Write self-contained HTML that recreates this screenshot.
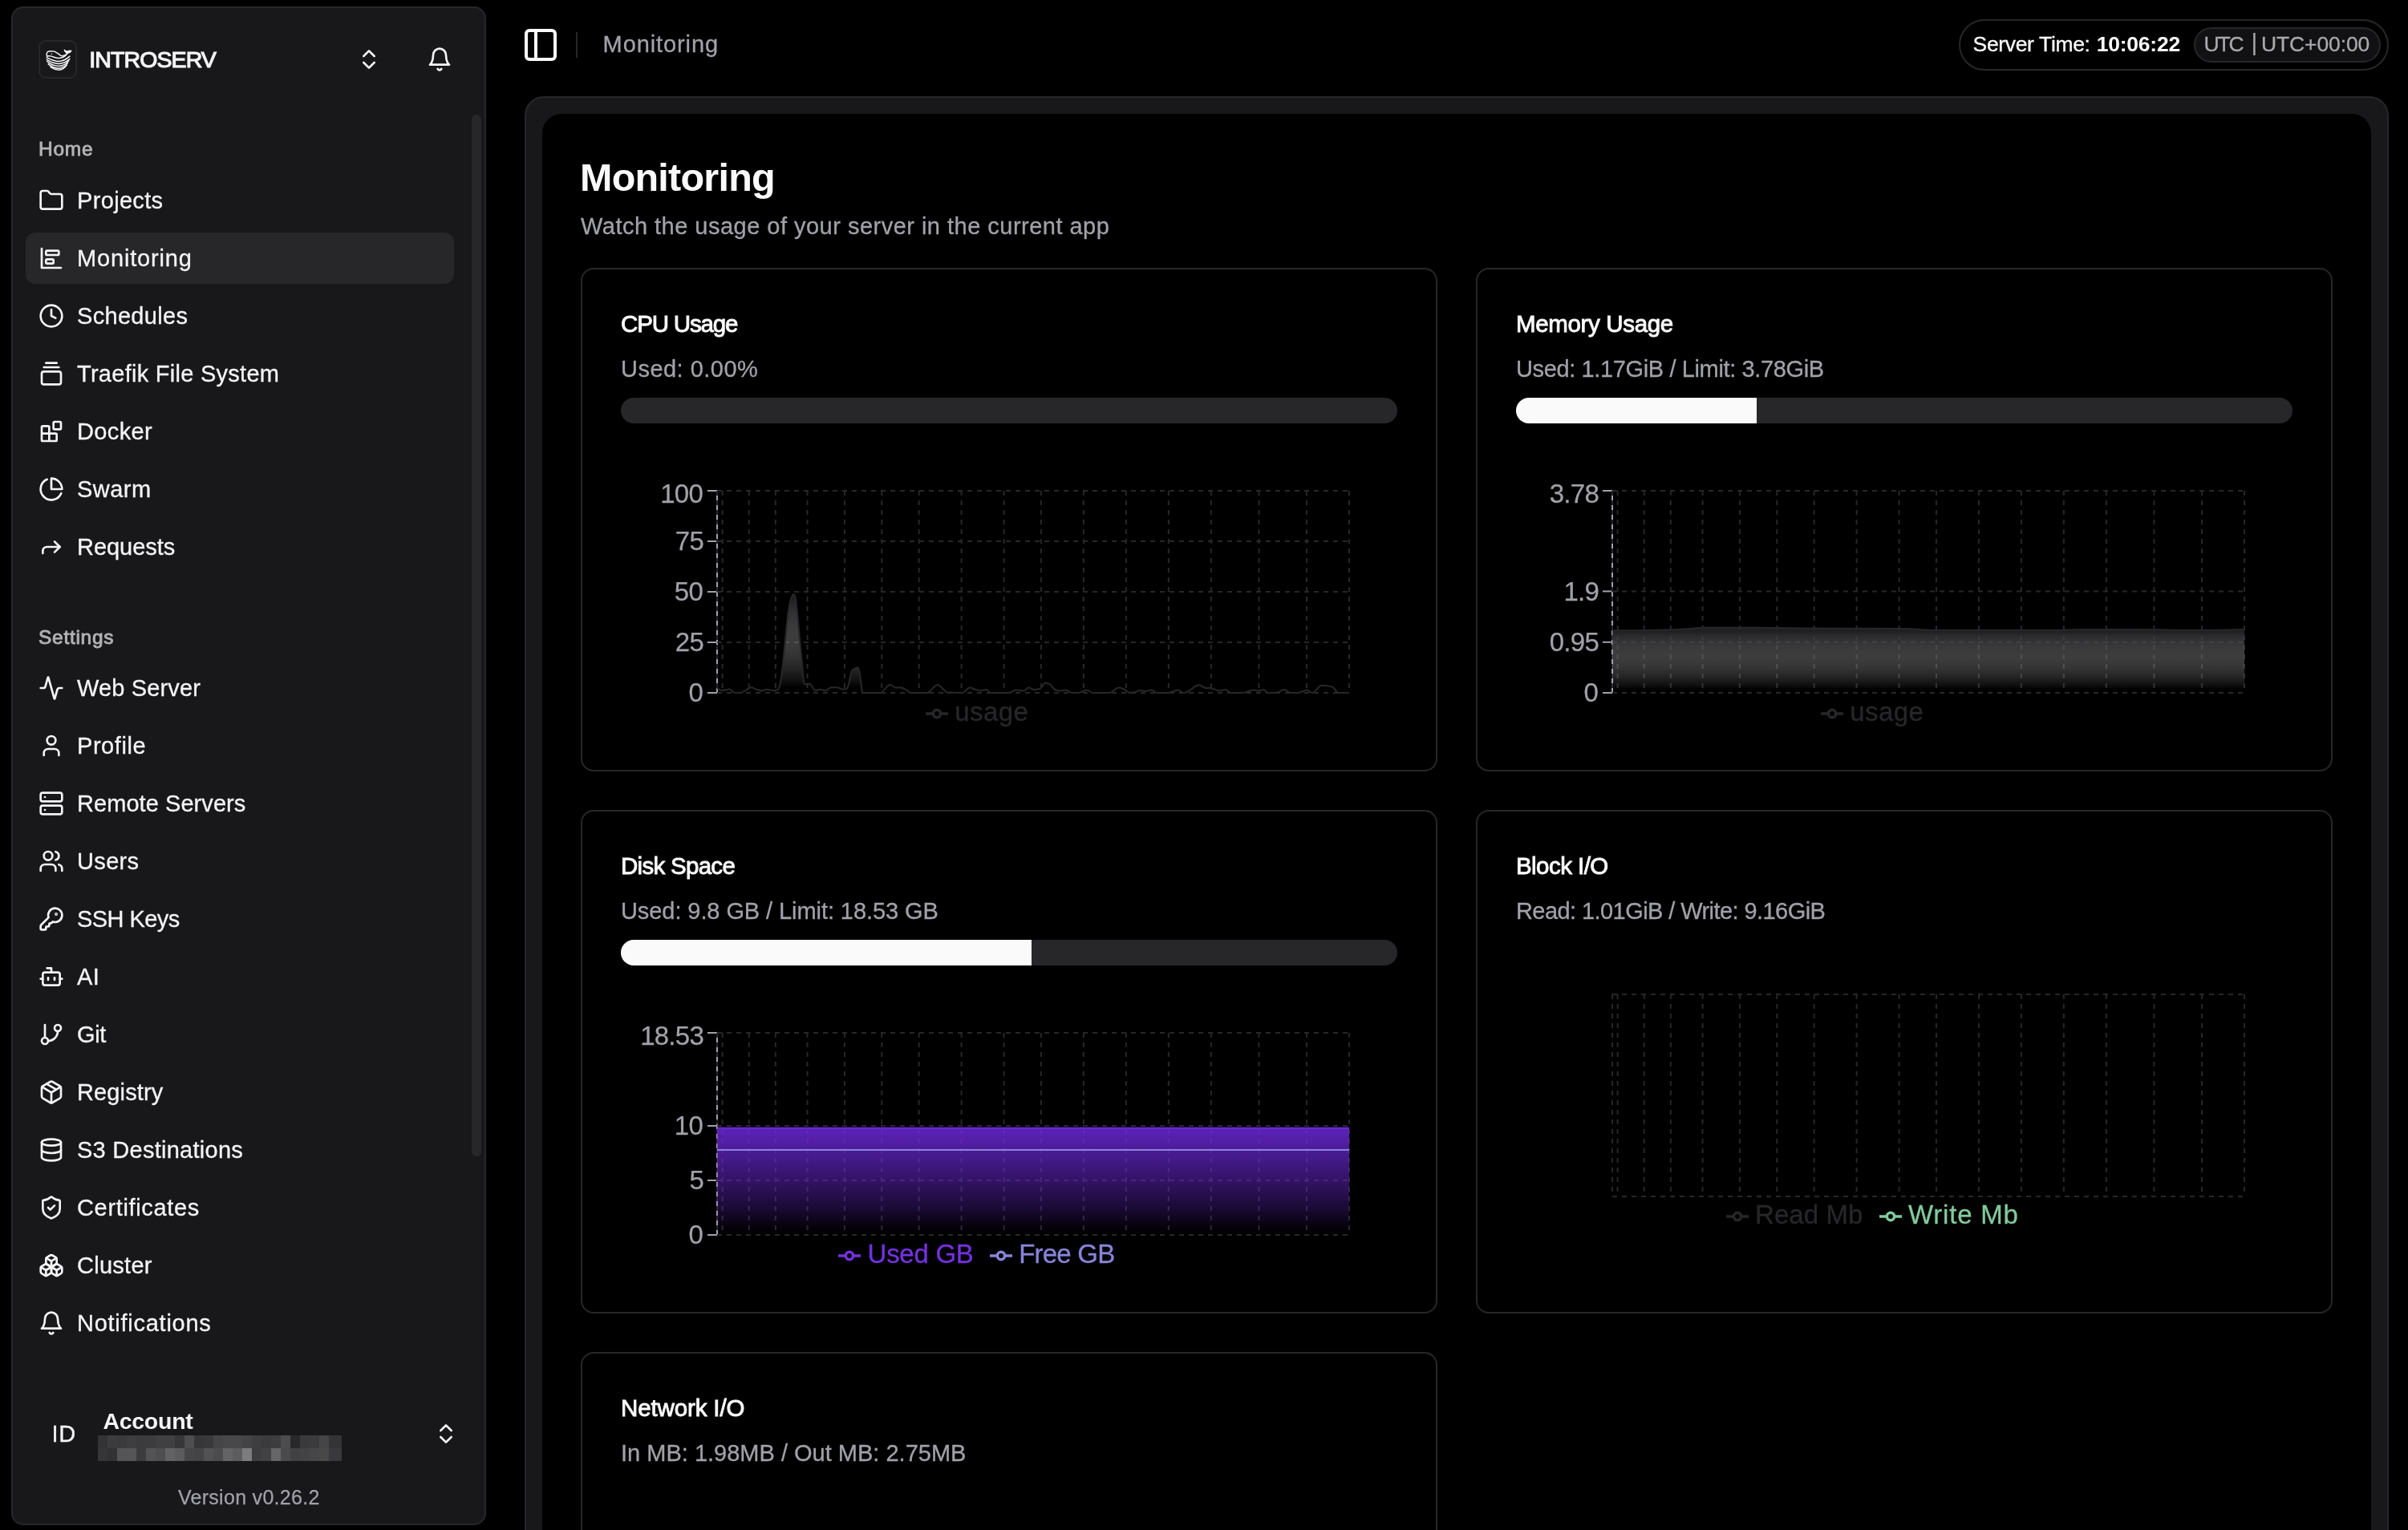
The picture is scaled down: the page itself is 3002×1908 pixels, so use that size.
<!DOCTYPE html>
<html lang="en"><head><meta charset="utf-8"><title>Monitoring</title>
<style>
html,body{margin:0;padding:0;background:#000;}
body{width:3002px;height:1908px;overflow:hidden;position:relative;font-family:"Liberation Sans",sans-serif;}
#root{position:absolute;left:0;top:0;width:3002px;height:1908px;overflow:hidden;will-change:transform;}
.abs{position:absolute;}
.t{position:absolute;white-space:nowrap;}
.ic{position:absolute;display:block;overflow:visible;}
</style></head><body><div id="root">
<div class="abs" style="left:14px;top:8px;width:592px;height:1894px;background:#18181b;border:2px solid #27272a;border-radius:15px;box-sizing:border-box"></div>
<div class="abs" style="left:48px;top:50px;width:48px;height:48px;border:2px solid #27272a;border-radius:9px;box-sizing:border-box"></div>
<svg class="ic" style="left:44px;top:46.1px" width="56" height="56" viewBox="0 0 1530 1530" fill="none" stroke="#f4f4f5" stroke-width="40" stroke-linecap="round" stroke-linejoin="round">
<path d="M400,655 C380,610 382,525 440,497 C500,482 600,486 650,496 C730,530 800,595 880,645 C960,652 1040,625 1085,548"/>
<path d="M400,655 C470,640 560,655 640,690 C720,725 860,735 950,690 C1010,660 1070,610 1100,552"/>
<path d="M990,440 C1015,472 1052,490 1097,490 C1132,468 1180,460 1228,472 C1200,522 1150,558 1090,552 C1030,532 997,492 990,440 Z" fill="#f4f4f5" stroke-width="30"/>
<path d="M386,700 C500,760 650,832 800,836 C950,830 1080,745 1172,660"/>
<path d="M386,770 C480,835 650,912 800,916 C950,910 1080,835 1172,752"/>
<path d="M402,835 C480,905 650,990 800,996 C940,990 1060,912 1142,812"/>
<path d="M442,925 C520,995 660,1070 800,1074 C930,1068 1030,1000 1102,892"/>
<path d="M520,1030 C600,1082 700,1124 800,1128 C900,1124 1000,1070 1072,962"/>
<circle cx="556" cy="578" r="20" fill="#f4f4f5" stroke="none"/>
</svg>
<div class="t" style="left:111.30px;top:60.27px;font-size:28.5px;line-height:28.5px;color:#f4f4f5;font-weight:400;letter-spacing:-0.906px;-webkit-text-stroke:1.15px #f4f4f5;">INTROSERV</div>
<svg class="ic" style="left:444.0px;top:58.0px" width="32" height="32" viewBox="0 0 24 24" fill="none" stroke="#f4f4f5" stroke-width="2" stroke-linecap="round" stroke-linejoin="round"><path d="m7 15 5 5 5-5"/><path d="m7 9 5-5 5 5"/></svg>
<svg class="ic" style="left:532.0px;top:58.0px" width="32" height="32" viewBox="0 0 24 24" fill="none" stroke="#f4f4f5" stroke-width="2" stroke-linecap="round" stroke-linejoin="round"><path d="M6 8a6 6 0 0 1 12 0c0 7 3 9 3 9H3s3-2 3-9"/><path d="M10.3 21a1.94 1.94 0 0 0 3.4 0"/></svg>
<div class="abs" style="left:588px;top:143px;width:12px;height:1299px;background:#27272a;border-radius:6px"></div>
<div class="abs" style="left:32px;top:290px;width:534px;height:64px;background:#27272a;border-radius:12px"></div>
<div class="t" style="left:48.00px;top:174.26px;font-size:24.5px;line-height:24.5px;color:#b2b2b3;font-weight:400;letter-spacing:0.757px;-webkit-text-stroke:0.9px #b2b2b3;">Home</div>
<div class="t" style="left:48.00px;top:782.66px;font-size:24.5px;line-height:24.5px;color:#b2b2b3;font-weight:400;letter-spacing:0.718px;-webkit-text-stroke:0.9px #b2b2b3;">Settings</div>
<svg class="ic" style="left:48.0px;top:234.0px" width="32" height="32" viewBox="0 0 24 24" fill="none" stroke="#f4f4f5" stroke-width="2" stroke-linecap="round" stroke-linejoin="round"><path d="M20 20a2 2 0 0 0 2-2V8a2 2 0 0 0-2-2h-7.9a2 2 0 0 1-1.69-.9L9.6 3.9A2 2 0 0 0 7.93 3H4a2 2 0 0 0-2 2v13a2 2 0 0 0 2 2Z"/></svg>
<div class="t" style="left:96.00px;top:236.15px;font-size:29px;line-height:29px;color:#f4f4f5;font-weight:400;letter-spacing:0.335px;-webkit-text-stroke:0.3px #f4f4f5;">Projects</div>
<svg class="ic" style="left:48.0px;top:306.0px" width="32" height="32" viewBox="0 0 24 24" fill="none" stroke="#f4f4f5" stroke-width="2" stroke-linecap="round" stroke-linejoin="round"><path d="M3 3v18h18"/><rect width="12" height="4" x="7" y="5" rx="1"/><rect width="7" height="4" x="7" y="13" rx="1"/></svg>
<div class="t" style="left:96.00px;top:308.15px;font-size:29px;line-height:29px;color:#f4f4f5;font-weight:400;letter-spacing:0.837px;-webkit-text-stroke:0.3px #f4f4f5;">Monitoring</div>
<svg class="ic" style="left:48.0px;top:378.0px" width="32" height="32" viewBox="0 0 24 24" fill="none" stroke="#f4f4f5" stroke-width="2" stroke-linecap="round" stroke-linejoin="round"><circle cx="12" cy="12" r="10"/><polyline points="12 6 12 12 16 14"/></svg>
<div class="t" style="left:96.00px;top:380.15px;font-size:29px;line-height:29px;color:#f4f4f5;font-weight:400;letter-spacing:0.309px;-webkit-text-stroke:0.3px #f4f4f5;">Schedules</div>
<svg class="ic" style="left:48.0px;top:450.0px" width="32" height="32" viewBox="0 0 24 24" fill="none" stroke="#f4f4f5" stroke-width="2" stroke-linecap="round" stroke-linejoin="round"><path d="M7 2h10"/><path d="M5 6h14"/><rect width="18" height="12" x="3" y="10" rx="2"/></svg>
<div class="t" style="left:96.00px;top:452.15px;font-size:29px;line-height:29px;color:#f4f4f5;font-weight:400;letter-spacing:0.271px;-webkit-text-stroke:0.3px #f4f4f5;">Traefik File System</div>
<svg class="ic" style="left:48.0px;top:522.0px" width="32" height="32" viewBox="0 0 24 24" fill="none" stroke="#f4f4f5" stroke-width="2" stroke-linecap="round" stroke-linejoin="round"><rect width="7" height="7" x="14" y="3" rx="1"/><path d="M10 21V8a1 1 0 0 0-1-1H4a1 1 0 0 0-1 1v12a1 1 0 0 0 1 1h12a1 1 0 0 0 1-1v-5a1 1 0 0 0-1-1H3"/></svg>
<div class="t" style="left:96.00px;top:524.15px;font-size:29px;line-height:29px;color:#f4f4f5;font-weight:400;letter-spacing:0.360px;-webkit-text-stroke:0.3px #f4f4f5;">Docker</div>
<svg class="ic" style="left:48.0px;top:594.0px" width="32" height="32" viewBox="0 0 24 24" fill="none" stroke="#f4f4f5" stroke-width="2" stroke-linecap="round" stroke-linejoin="round"><path d="M21.21 15.89A10 10 0 1 1 8 2.83"/><path d="M22 12A10 10 0 0 0 12 2v10z"/></svg>
<div class="t" style="left:96.00px;top:596.15px;font-size:29px;line-height:29px;color:#f4f4f5;font-weight:400;letter-spacing:0.482px;-webkit-text-stroke:0.3px #f4f4f5;">Swarm</div>
<svg class="ic" style="left:48.0px;top:666.0px" width="32" height="32" viewBox="0 0 24 24" fill="none" stroke="#f4f4f5" stroke-width="2" stroke-linecap="round" stroke-linejoin="round"><polyline points="15 17 20 12 15 7"/><path d="M4 18v-2a4 4 0 0 1 4-4h12"/></svg>
<div class="t" style="left:96.00px;top:668.15px;font-size:29px;line-height:29px;color:#f4f4f5;font-weight:400;letter-spacing:-0.045px;-webkit-text-stroke:0.3px #f4f4f5;">Requests</div>
<svg class="ic" style="left:48.0px;top:842.0px" width="32" height="32" viewBox="0 0 24 24" fill="none" stroke="#f4f4f5" stroke-width="2" stroke-linecap="round" stroke-linejoin="round"><path d="M22 12h-2.48a2 2 0 0 0-1.93 1.46l-2.35 8.36a.25.25 0 0 1-.48 0L9.24 2.18a.25.25 0 0 0-.48 0l-2.35 8.36A2 2 0 0 1 4.49 12H2"/></svg>
<div class="t" style="left:96.00px;top:844.15px;font-size:29px;line-height:29px;color:#f4f4f5;font-weight:400;letter-spacing:0.142px;-webkit-text-stroke:0.3px #f4f4f5;">Web Server</div>
<svg class="ic" style="left:48.0px;top:914.0px" width="32" height="32" viewBox="0 0 24 24" fill="none" stroke="#f4f4f5" stroke-width="2" stroke-linecap="round" stroke-linejoin="round"><path d="M19 21v-2a4 4 0 0 0-4-4H9a4 4 0 0 0-4 4v2"/><circle cx="12" cy="7" r="4"/></svg>
<div class="t" style="left:96.00px;top:916.15px;font-size:29px;line-height:29px;color:#f4f4f5;font-weight:400;letter-spacing:0.555px;-webkit-text-stroke:0.3px #f4f4f5;">Profile</div>
<svg class="ic" style="left:48.0px;top:986.0px" width="32" height="32" viewBox="0 0 24 24" fill="none" stroke="#f4f4f5" stroke-width="2" stroke-linecap="round" stroke-linejoin="round"><rect width="20" height="8" x="2" y="2" rx="2" ry="2"/><rect width="20" height="8" x="2" y="14" rx="2" ry="2"/><line x1="6" x2="6.01" y1="6" y2="6"/><line x1="6" x2="6.01" y1="18" y2="18"/></svg>
<div class="t" style="left:96.00px;top:988.15px;font-size:29px;line-height:29px;color:#f4f4f5;font-weight:400;letter-spacing:0.060px;-webkit-text-stroke:0.3px #f4f4f5;">Remote Servers</div>
<svg class="ic" style="left:48.0px;top:1058.0px" width="32" height="32" viewBox="0 0 24 24" fill="none" stroke="#f4f4f5" stroke-width="2" stroke-linecap="round" stroke-linejoin="round"><path d="M16 21v-2a4 4 0 0 0-4-4H6a4 4 0 0 0-4 4v2"/><circle cx="9" cy="7" r="4"/><path d="M22 21v-2a4 4 0 0 0-3-3.87"/><path d="M16 3.13a4 4 0 0 1 0 7.75"/></svg>
<div class="t" style="left:96.00px;top:1060.15px;font-size:29px;line-height:29px;color:#f4f4f5;font-weight:400;letter-spacing:0.343px;-webkit-text-stroke:0.3px #f4f4f5;">Users</div>
<svg class="ic" style="left:48.0px;top:1130.0px" width="32" height="32" viewBox="0 0 24 24" fill="none" stroke="#f4f4f5" stroke-width="2" stroke-linecap="round" stroke-linejoin="round"><path d="M2.586 17.414A2 2 0 0 0 2 18.828V21a1 1 0 0 0 1 1h3a1 1 0 0 0 1-1v-1a1 1 0 0 1 1-1h1a1 1 0 0 0 1-1v-1a1 1 0 0 1 1-1h.172a2 2 0 0 0 1.414-.586l.814-.814a6.5 6.5 0 1 0-4-4z"/><circle cx="16.5" cy="7.5" r=".5" fill="currentColor"/></svg>
<div class="t" style="left:96.00px;top:1132.15px;font-size:29px;line-height:29px;color:#f4f4f5;font-weight:400;letter-spacing:-0.565px;-webkit-text-stroke:0.3px #f4f4f5;">SSH Keys</div>
<svg class="ic" style="left:48.0px;top:1202.0px" width="32" height="32" viewBox="0 0 24 24" fill="none" stroke="#f4f4f5" stroke-width="2" stroke-linecap="round" stroke-linejoin="round"><path d="M12 8V4H8"/><rect width="16" height="12" x="4" y="8" rx="2"/><path d="M2 14h2"/><path d="M20 14h2"/><path d="M15 13v2"/><path d="M9 13v2"/></svg>
<div class="t" style="left:96.00px;top:1204.15px;font-size:29px;line-height:29px;color:#f4f4f5;font-weight:400;letter-spacing:0.457px;-webkit-text-stroke:0.3px #f4f4f5;">AI</div>
<svg class="ic" style="left:48.0px;top:1274.0px" width="32" height="32" viewBox="0 0 24 24" fill="none" stroke="#f4f4f5" stroke-width="2" stroke-linecap="round" stroke-linejoin="round"><line x1="6" x2="6" y1="3" y2="15"/><circle cx="18" cy="6" r="3"/><circle cx="6" cy="18" r="3"/><path d="M18 9a9 9 0 0 1-9 9"/></svg>
<div class="t" style="left:96.00px;top:1276.15px;font-size:29px;line-height:29px;color:#f4f4f5;font-weight:400;letter-spacing:-0.350px;-webkit-text-stroke:0.3px #f4f4f5;">Git</div>
<svg class="ic" style="left:48.0px;top:1346.0px" width="32" height="32" viewBox="0 0 24 24" fill="none" stroke="#f4f4f5" stroke-width="2" stroke-linecap="round" stroke-linejoin="round"><path d="M11 21.73a2 2 0 0 0 2 0l7-4A2 2 0 0 0 21 16V8a2 2 0 0 0-1-1.73l-7-4a2 2 0 0 0-2 0l-7 4A2 2 0 0 0 3 8v8a2 2 0 0 0 1 1.73z"/><path d="M12 22V12"/><path d="m3.3 7 7.703 4.734a2 2 0 0 0 1.994 0L20.7 7"/><path d="m7.5 4.27 9 5.15"/></svg>
<div class="t" style="left:96.00px;top:1348.15px;font-size:29px;line-height:29px;color:#f4f4f5;font-weight:400;letter-spacing:0.135px;-webkit-text-stroke:0.3px #f4f4f5;">Registry</div>
<svg class="ic" style="left:48.0px;top:1418.0px" width="32" height="32" viewBox="0 0 24 24" fill="none" stroke="#f4f4f5" stroke-width="2" stroke-linecap="round" stroke-linejoin="round"><ellipse cx="12" cy="5" rx="9" ry="3"/><path d="M3 5V19A9 3 0 0 0 21 19V5"/><path d="M3 12A9 3 0 0 0 21 12"/></svg>
<div class="t" style="left:96.00px;top:1420.15px;font-size:29px;line-height:29px;color:#f4f4f5;font-weight:400;letter-spacing:0.263px;-webkit-text-stroke:0.3px #f4f4f5;">S3 Destinations</div>
<svg class="ic" style="left:48.0px;top:1490.0px" width="32" height="32" viewBox="0 0 24 24" fill="none" stroke="#f4f4f5" stroke-width="2" stroke-linecap="round" stroke-linejoin="round"><path d="M20 13c0 5-3.5 7.5-7.66 8.95a1 1 0 0 1-.67-.01C7.5 20.5 4 18 4 13V6a1 1 0 0 1 1-1c2 0 4.5-1.2 6.24-2.72a1.17 1.17 0 0 1 1.52 0C14.51 3.81 17 5 19 5a1 1 0 0 1 1 1z"/><path d="m9 12 2 2 4-4"/></svg>
<div class="t" style="left:96.00px;top:1492.15px;font-size:29px;line-height:29px;color:#f4f4f5;font-weight:400;letter-spacing:0.660px;-webkit-text-stroke:0.3px #f4f4f5;">Certificates</div>
<svg class="ic" style="left:48.0px;top:1562.0px" width="32" height="32" viewBox="0 0 24 24" fill="none" stroke="#f4f4f5" stroke-width="2" stroke-linecap="round" stroke-linejoin="round"><path d="M2.97 12.92A2 2 0 0 0 2 14.63v3.24a2 2 0 0 0 .97 1.71l3 1.8a2 2 0 0 0 2.06 0L12 19v-5.5l-5-3-4.03 2.42Z"/><path d="m7 16.5-4.74-2.85"/><path d="m7 16.5 5-3"/><path d="M7 16.5v5.17"/><path d="M12 13.5V19l3.97 2.38a2 2 0 0 0 2.06 0l3-1.8a2 2 0 0 0 .97-1.71v-3.24a2 2 0 0 0-.97-1.71L17 10.5l-5 3Z"/><path d="m17 16.5-5-3"/><path d="m17 16.5 4.74-2.85"/><path d="M17 16.5v5.17"/><path d="M7.97 4.42A2 2 0 0 0 7 6.13v4.37l5 3 5-3V6.13a2 2 0 0 0-.97-1.71l-3-1.8a2 2 0 0 0-2.06 0l-3 1.8Z"/><path d="M12 8 7.26 5.15"/><path d="m12 8 4.74-2.85"/><path d="M12 13.5V8"/></svg>
<div class="t" style="left:96.00px;top:1564.15px;font-size:29px;line-height:29px;color:#f4f4f5;font-weight:400;letter-spacing:0.267px;-webkit-text-stroke:0.3px #f4f4f5;">Cluster</div>
<svg class="ic" style="left:48.0px;top:1634.0px" width="32" height="32" viewBox="0 0 24 24" fill="none" stroke="#f4f4f5" stroke-width="2" stroke-linecap="round" stroke-linejoin="round"><path d="M6 8a6 6 0 0 1 12 0c0 7 3 9 3 9H3s3-2 3-9"/><path d="M10.3 21a1.94 1.94 0 0 0 3.4 0"/></svg>
<div class="t" style="left:96.00px;top:1636.15px;font-size:29px;line-height:29px;color:#f4f4f5;font-weight:400;letter-spacing:0.737px;-webkit-text-stroke:0.3px #f4f4f5;">Notifications</div>
<div class="t" style="left:64.60px;top:1773.95px;font-size:29px;line-height:29px;color:#f4f4f5;font-weight:400;letter-spacing:0.543px;-webkit-text-stroke:0.3px #f4f4f5;">ID</div>
<div class="t" style="left:128.40px;top:1757.87px;font-size:28.5px;line-height:28.5px;color:#f4f4f5;font-weight:700;letter-spacing:-0.268px;">Account</div>
<svg class="ic" style="left:540.0px;top:1772.0px" width="32" height="32" viewBox="0 0 24 24" fill="none" stroke="#f4f4f5" stroke-width="2" stroke-linecap="round" stroke-linejoin="round"><path d="m7 15 5 5 5-5"/><path d="m7 9 5-5 5 5"/></svg>
<div class="t" style="left:221.90px;top:1855.44px;font-size:25px;line-height:25px;color:#a1a1aa;font-weight:400;letter-spacing:0.297px;-webkit-text-stroke:0.25px #a1a1aa;">Version v0.26.2</div>
<svg class="ic" style="left:122px;top:1790px" width="304" height="32" viewBox="0 0 304 32" shape-rendering="crispEdges"><rect x="0" y="0" width="12" height="16" fill="#333335"/><rect x="12" y="0" width="12" height="16" fill="#3c3c3e"/><rect x="24" y="0" width="12" height="16" fill="#3a3a3c"/><rect x="36" y="0" width="12" height="16" fill="#3e3e40"/><rect x="48" y="0" width="12" height="16" fill="#3b3b3d"/><rect x="60" y="0" width="12" height="16" fill="#3c3c3e"/><rect x="72" y="0" width="12" height="16" fill="#404042"/><rect x="84" y="0" width="12" height="16" fill="#404042"/><rect x="96" y="0" width="12" height="16" fill="#363638"/><rect x="108" y="0" width="12" height="16" fill="#4e4e50"/><rect x="120" y="0" width="12" height="16" fill="#363638"/><rect x="132" y="0" width="12" height="16" fill="#39393b"/><rect x="144" y="0" width="12" height="16" fill="#454547"/><rect x="156" y="0" width="12" height="16" fill="#48484a"/><rect x="168" y="0" width="12" height="16" fill="#48484a"/><rect x="180" y="0" width="12" height="16" fill="#444446"/><rect x="192" y="0" width="12" height="16" fill="#3e3e40"/><rect x="204" y="0" width="12" height="16" fill="#3b3b3d"/><rect x="216" y="0" width="12" height="16" fill="#3d3d3f"/><rect x="228" y="0" width="12" height="16" fill="#4c4c4e"/><rect x="240" y="0" width="12" height="16" fill="#28282a"/><rect x="252" y="0" width="12" height="16" fill="#3a3a3c"/><rect x="264" y="0" width="12" height="16" fill="#3b3b3d"/><rect x="276" y="0" width="12" height="16" fill="#454547"/><rect x="288" y="0" width="12" height="16" fill="#343436"/><rect x="300" y="0" width="4" height="16" fill="#343436"/><rect x="0" y="16" width="12" height="16" fill="#363638"/><rect x="12" y="16" width="12" height="16" fill="#323234"/><rect x="24" y="16" width="12" height="16" fill="#555557"/><rect x="36" y="16" width="12" height="16" fill="#555557"/><rect x="48" y="16" width="12" height="16" fill="#3c3c3e"/><rect x="60" y="16" width="12" height="16" fill="#535355"/><rect x="72" y="16" width="12" height="16" fill="#4e4e50"/><rect x="84" y="16" width="12" height="16" fill="#626264"/><rect x="96" y="16" width="12" height="16" fill="#5c5c5e"/><rect x="108" y="16" width="12" height="16" fill="#464648"/><rect x="120" y="16" width="12" height="16" fill="#444446"/><rect x="132" y="16" width="12" height="16" fill="#525254"/><rect x="144" y="16" width="12" height="16" fill="#4c4c4e"/><rect x="156" y="16" width="12" height="16" fill="#646466"/><rect x="168" y="16" width="12" height="16" fill="#5c5c5e"/><rect x="180" y="16" width="12" height="16" fill="#7c7c7e"/><rect x="192" y="16" width="12" height="16" fill="#3d3d3f"/><rect x="204" y="16" width="12" height="16" fill="#424244"/><rect x="216" y="16" width="12" height="16" fill="#666668"/><rect x="228" y="16" width="12" height="16" fill="#4a4a4c"/><rect x="240" y="16" width="12" height="16" fill="#414143"/><rect x="252" y="16" width="12" height="16" fill="#434345"/><rect x="264" y="16" width="12" height="16" fill="#464648"/><rect x="276" y="16" width="12" height="16" fill="#484849"/><rect x="288" y="16" width="12" height="16" fill="#39393b"/><rect x="300" y="16" width="4" height="16" fill="#39393b"/></svg>
<svg class="ic" style="left:650.0px;top:32.0px" width="48" height="48" viewBox="0 0 24 24" fill="none" stroke="#fafafa" stroke-width="2" stroke-linecap="round" stroke-linejoin="round"><rect width="18" height="18" x="3" y="3" rx="2"/><path d="M9 3v18"/></svg>
<div class="abs" style="left:718px;top:40px;width:2px;height:32px;background:#27272a"></div>
<div class="t" style="left:751.60px;top:41.35px;font-size:29px;line-height:29px;color:#a1a1aa;font-weight:400;letter-spacing:0.903px;-webkit-text-stroke:0.3px #a1a1aa;">Monitoring</div>
<div class="abs" style="left:2442px;top:24px;width:536px;height:64px;border:2px solid #27272a;border-radius:32px;box-sizing:border-box"></div>
<div class="abs" style="left:2735px;top:34px;width:233px;height:44px;border:2px solid #27272a;background:#111113;border-radius:22px;box-sizing:border-box"></div>
<div class="t" style="left:2459.60px;top:42.17px;font-size:26.5px;line-height:26.5px;color:#fafafa;font-weight:400;letter-spacing:-0.356px;-webkit-text-stroke:0.3px #fafafa;">Server Time:</div>
<div class="t" style="left:2613.70px;top:42.17px;font-size:26.5px;line-height:26.5px;color:#fafafa;font-weight:700;letter-spacing:-0.220px;">10:06:22</div>
<div class="t" style="left:2747.50px;top:42.17px;font-size:26.5px;line-height:26.5px;color:#a9a9ae;font-weight:400;letter-spacing:-2.162px;-webkit-text-stroke:0.3px #a9a9ae;">UTC</div>
<div class="t" style="left:2806.40px;top:37.91px;font-size:30px;line-height:30px;color:#a9a9ae;font-weight:400;letter-spacing:0.000px;">|</div>
<div class="t" style="left:2819.00px;top:42.17px;font-size:26.5px;line-height:26.5px;color:#a9a9ae;font-weight:400;letter-spacing:-0.127px;-webkit-text-stroke:0.3px #a9a9ae;">UTC+00:00</div>
<div class="abs" style="left:654px;top:120px;width:2324px;height:1900px;background:#18181b;border:2px solid #27272a;border-radius:24px;box-sizing:border-box"></div>
<div class="abs" style="left:676px;top:142px;width:2280px;height:1900px;background:#000;border-radius:24px"></div>
<div class="t" style="left:723.00px;top:197.24px;font-size:48.5px;line-height:48.5px;color:#fafafa;font-weight:700;letter-spacing:-0.764px;">Monitoring</div>
<div class="t" style="left:724.00px;top:268.45px;font-size:29px;line-height:29px;color:#a1a1aa;font-weight:400;letter-spacing:0.483px;-webkit-text-stroke:0.3px #a1a1aa;">Watch the usage of your server in the current app</div>
<div class="abs" style="left:724px;top:334px;width:1068px;height:628px;border:2px solid #27272a;border-radius:16px;box-sizing:border-box"></div>
<div class="t" style="left:774.00px;top:389.03px;font-size:29.5px;line-height:29.5px;color:#fafafa;font-weight:400;letter-spacing:-1.168px;-webkit-text-stroke:0.9px #fafafa;">CPU Usage</div>
<div class="t" style="left:774.00px;top:445.95px;font-size:29px;line-height:29px;color:#a1a1aa;font-weight:400;letter-spacing:0.474px;-webkit-text-stroke:0.3px #a1a1aa;">Used: 0.00%</div>
<div class="abs" style="left:774px;top:496px;width:968px;height:32px;background:#27272a;border-radius:16px;overflow:hidden"><div style="width:0px;height:32px;background:#fafafa"></div></div>
<div class="abs" style="left:1840px;top:334px;width:1068px;height:628px;border:2px solid #27272a;border-radius:16px;box-sizing:border-box"></div>
<div class="t" style="left:1890.00px;top:389.03px;font-size:29.5px;line-height:29.5px;color:#fafafa;font-weight:400;letter-spacing:-0.345px;-webkit-text-stroke:0.9px #fafafa;">Memory Usage</div>
<div class="t" style="left:1890.00px;top:445.95px;font-size:29px;line-height:29px;color:#a1a1aa;font-weight:400;letter-spacing:-0.374px;-webkit-text-stroke:0.3px #a1a1aa;">Used: 1.17GiB / Limit: 3.78GiB</div>
<div class="abs" style="left:1890px;top:496px;width:968px;height:32px;background:#27272a;border-radius:16px;overflow:hidden"><div style="width:300px;height:32px;background:#fafafa"></div></div>
<div class="abs" style="left:724px;top:1010px;width:1068px;height:628px;border:2px solid #27272a;border-radius:16px;box-sizing:border-box"></div>
<div class="t" style="left:774.00px;top:1065.03px;font-size:29.5px;line-height:29.5px;color:#fafafa;font-weight:400;letter-spacing:-0.710px;-webkit-text-stroke:0.9px #fafafa;">Disk Space</div>
<div class="t" style="left:774.00px;top:1121.95px;font-size:29px;line-height:29px;color:#a1a1aa;font-weight:400;letter-spacing:-0.079px;-webkit-text-stroke:0.3px #a1a1aa;">Used: 9.8 GB / Limit: 18.53 GB</div>
<div class="abs" style="left:774px;top:1172px;width:968px;height:32px;background:#27272a;border-radius:16px;overflow:hidden"><div style="width:512px;height:32px;background:#fafafa"></div></div>
<div class="abs" style="left:1840px;top:1010px;width:1068px;height:628px;border:2px solid #27272a;border-radius:16px;box-sizing:border-box"></div>
<div class="t" style="left:1890.00px;top:1065.03px;font-size:29.5px;line-height:29.5px;color:#fafafa;font-weight:400;letter-spacing:-0.553px;-webkit-text-stroke:0.9px #fafafa;">Block I/O</div>
<div class="t" style="left:1890.00px;top:1121.95px;font-size:29px;line-height:29px;color:#a1a1aa;font-weight:400;letter-spacing:-0.572px;-webkit-text-stroke:0.3px #a1a1aa;">Read: 1.01GiB / Write: 9.16GiB</div>
<div class="abs" style="left:724px;top:1686px;width:1068px;height:628px;border:2px solid #27272a;border-radius:16px;box-sizing:border-box"></div>
<div class="t" style="left:774.00px;top:1741.03px;font-size:29.5px;line-height:29.5px;color:#fafafa;font-weight:400;letter-spacing:-0.128px;-webkit-text-stroke:0.9px #fafafa;">Network I/O</div>
<div class="t" style="left:774.00px;top:1797.95px;font-size:29px;line-height:29px;color:#a1a1aa;font-weight:400;letter-spacing:0.004px;-webkit-text-stroke:0.3px #a1a1aa;">In MB: 1.98MB / Out MB: 2.75MB</div>
<div class="t" style="left:823.19px;top:598.67px;font-size:33px;line-height:33px;color:#a1a1aa;font-weight:400;letter-spacing:-0.750px;-webkit-text-stroke:0.25px #a1a1aa;">100</div>
<div class="t" style="left:841.80px;top:658.27px;font-size:33px;line-height:33px;color:#a1a1aa;font-weight:400;letter-spacing:-0.750px;-webkit-text-stroke:0.25px #a1a1aa;">75</div>
<div class="t" style="left:840.80px;top:721.27px;font-size:33px;line-height:33px;color:#a1a1aa;font-weight:400;letter-spacing:-0.750px;-webkit-text-stroke:0.25px #a1a1aa;">50</div>
<div class="t" style="left:841.80px;top:784.27px;font-size:33px;line-height:33px;color:#a1a1aa;font-weight:400;letter-spacing:-0.750px;-webkit-text-stroke:0.25px #a1a1aa;">25</div>
<div class="t" style="left:858.40px;top:847.27px;font-size:33px;line-height:33px;color:#a1a1aa;font-weight:400;letter-spacing:-0.750px;-webkit-text-stroke:0.25px #a1a1aa;">0</div>
<svg class="ic" style="left:1154px;top:876px" width="28" height="28" viewBox="0 0 32 32"><path stroke-width="4" fill="none" stroke="#27272a" d="M0,16h10.667A5.333,5.333,0,1,1,21.333,16H32M21.333,16A5.333,5.333,0,1,1,10.667,16"/></svg>
<div class="t" style="left:1190.20px;top:871.07px;font-size:33px;line-height:33px;color:#27272a;font-weight:400;letter-spacing:0.435px;-webkit-text-stroke:0.3px #27272a;">usage</div>
<div class="t" style="left:1931.78px;top:598.67px;font-size:33px;line-height:33px;color:#a1a1aa;font-weight:400;letter-spacing:-0.750px;-webkit-text-stroke:0.25px #a1a1aa;">3.78</div>
<div class="t" style="left:1949.38px;top:720.67px;font-size:33px;line-height:33px;color:#a1a1aa;font-weight:400;letter-spacing:-0.750px;-webkit-text-stroke:0.25px #a1a1aa;">1.9</div>
<div class="t" style="left:1931.78px;top:784.07px;font-size:33px;line-height:33px;color:#a1a1aa;font-weight:400;letter-spacing:-0.750px;-webkit-text-stroke:0.25px #a1a1aa;">0.95</div>
<div class="t" style="left:1974.40px;top:847.27px;font-size:33px;line-height:33px;color:#a1a1aa;font-weight:400;letter-spacing:-0.750px;-webkit-text-stroke:0.25px #a1a1aa;">0</div>
<svg class="ic" style="left:2270px;top:876px" width="28" height="28" viewBox="0 0 32 32"><path stroke-width="4" fill="none" stroke="#27272a" d="M0,16h10.667A5.333,5.333,0,1,1,21.333,16H32M21.333,16A5.333,5.333,0,1,1,10.667,16"/></svg>
<div class="t" style="left:2306.20px;top:871.07px;font-size:33px;line-height:33px;color:#27272a;font-weight:400;letter-spacing:0.435px;-webkit-text-stroke:0.3px #27272a;">usage</div>
<div class="t" style="left:798.17px;top:1274.67px;font-size:33px;line-height:33px;color:#a1a1aa;font-weight:400;letter-spacing:-0.750px;-webkit-text-stroke:0.25px #a1a1aa;">18.53</div>
<div class="t" style="left:840.80px;top:1387.27px;font-size:33px;line-height:33px;color:#a1a1aa;font-weight:400;letter-spacing:-0.750px;-webkit-text-stroke:0.25px #a1a1aa;">10</div>
<div class="t" style="left:859.40px;top:1455.27px;font-size:33px;line-height:33px;color:#a1a1aa;font-weight:400;letter-spacing:-0.750px;-webkit-text-stroke:0.25px #a1a1aa;">5</div>
<div class="t" style="left:858.40px;top:1523.27px;font-size:33px;line-height:33px;color:#a1a1aa;font-weight:400;letter-spacing:-0.750px;-webkit-text-stroke:0.25px #a1a1aa;">0</div>
<svg class="ic" style="left:1045px;top:1552px" width="28" height="28" viewBox="0 0 32 32"><path stroke-width="4" fill="none" stroke="#7431e0" d="M0,16h10.667A5.333,5.333,0,1,1,21.333,16H32M21.333,16A5.333,5.333,0,1,1,10.667,16"/></svg>
<div class="t" style="left:1081.60px;top:1547.07px;font-size:33px;line-height:33px;color:#7431e0;font-weight:400;letter-spacing:-0.279px;-webkit-text-stroke:0.3px #7431e0;">Used GB</div>
<svg class="ic" style="left:1234px;top:1552px" width="28" height="28" viewBox="0 0 32 32"><path stroke-width="4" fill="none" stroke="#8884d8" d="M0,16h10.667A5.333,5.333,0,1,1,21.333,16H32M21.333,16A5.333,5.333,0,1,1,10.667,16"/></svg>
<div class="t" style="left:1270.20px;top:1547.07px;font-size:33px;line-height:33px;color:#8884d8;font-weight:400;letter-spacing:-0.782px;-webkit-text-stroke:0.3px #8884d8;">Free GB</div>
<svg class="ic" style="left:2152px;top:1503px" width="28" height="28" viewBox="0 0 32 32"><path stroke-width="4" fill="none" stroke="#27272a" d="M0,16h10.667A5.333,5.333,0,1,1,21.333,16H32M21.333,16A5.333,5.333,0,1,1,10.667,16"/></svg>
<div class="t" style="left:2188.00px;top:1498.07px;font-size:33px;line-height:33px;color:#27272a;font-weight:400;letter-spacing:0.075px;-webkit-text-stroke:0.3px #27272a;">Read Mb</div>
<svg class="ic" style="left:2343px;top:1503px" width="28" height="28" viewBox="0 0 32 32"><path stroke-width="4" fill="none" stroke="#82ca9d" d="M0,16h10.667A5.333,5.333,0,1,1,21.333,16H32M21.333,16A5.333,5.333,0,1,1,10.667,16"/></svg>
<div class="t" style="left:2379.00px;top:1498.07px;font-size:33px;line-height:33px;color:#82ca9d;font-weight:400;letter-spacing:0.778px;-webkit-text-stroke:0.3px #82ca9d;">Write Mb</div>
<svg class="ic" style="left:0;top:0" width="3002" height="1908" viewBox="0 0 3002 1908">
<defs>
<linearGradient id="gGray" x1="0" y1="0" x2="0" y2="1"><stop offset="5%" stop-color="#27272A" stop-opacity="0.8"/><stop offset="95%" stop-color="#ffffff" stop-opacity="0"/></linearGradient>
<linearGradient id="gPurple" x1="0" y1="0" x2="0" y2="1"><stop offset="5%" stop-color="#6C28D9" stop-opacity="0.82"/><stop offset="50%" stop-color="#6C28D9" stop-opacity="0.46"/><stop offset="75%" stop-color="#6C28D9" stop-opacity="0.245"/><stop offset="92%" stop-color="#6C28D9" stop-opacity="0.06"/><stop offset="100%" stop-color="#6C28D9" stop-opacity="0"/></linearGradient>
</defs>
<line x1="894" y1="612" x2="894" y2="864" stroke="#a1a1aa" stroke-width="2"/><line x1="882" y1="612" x2="894" y2="612" stroke="#a1a1aa" stroke-width="2"/><line x1="882" y1="675" x2="894" y2="675" stroke="#a1a1aa" stroke-width="2"/><line x1="882" y1="738" x2="894" y2="738" stroke="#a1a1aa" stroke-width="2"/><line x1="882" y1="801" x2="894" y2="801" stroke="#a1a1aa" stroke-width="2"/><line x1="882" y1="864" x2="894" y2="864" stroke="#a1a1aa" stroke-width="2"/><path d="M894,612H1682M894,675H1682M894,738H1682M894,801H1682M894,864H1682M894.00,612V864M900.62,612V864M933.73,612V864M966.84,612V864M1006.57,612V864M1052.92,612V864M1099.28,612V864M1145.63,612V864M1198.60,612V864M1251.58,612V864M1297.93,612V864M1350.90,612V864M1403.88,612V864M1456.85,612V864M1509.83,612V864M1569.42,612V864M1629.02,612V864M1682.00,612V864" stroke="#27272a" stroke-width="2" stroke-dasharray="6 6" fill="none"/>
<path d="M894.00,858.22C896.20,859.69,898.39,861.16,900.59,861.16C903.59,861.16,906.60,859.49,909.61,859.49C911.57,859.49,913.53,863.60,915.49,863.71C917.94,863.84,920.39,863.90,922.84,863.90C924.97,863.90,927.09,862.22,929.22,861.16C931.50,860.02,933.79,857.24,936.08,857.24C938.37,857.24,940.65,859.00,942.94,859.69C945.23,860.37,947.52,861.35,949.80,861.35C951.93,861.35,954.05,859.69,956.18,859.69C958.30,859.69,960.42,861.16,962.55,861.16C964.51,861.16,966.47,860.99,968.43,860.67C969.41,860.50,970.39,859.52,971.37,857.24C972.35,854.95,973.33,849.17,974.31,842.53C975.78,832.58,977.25,815.20,978.73,800.96C979.87,789.89,981.01,775.85,982.16,767.04C983.63,755.72,985.10,749.67,986.57,745.47C987.55,742.67,988.53,741.06,989.51,741.06C990.33,741.06,991.14,743.18,991.96,747.43C992.78,751.68,993.59,761.04,994.41,769.00C995.39,778.55,996.37,790.67,997.35,800.96C998.33,811.25,999.31,820.61,1000.29,830.76C1000.95,837.53,1001.60,849.78,1002.25,851.35C1002.75,852.53,1003.24,853.12,1003.73,853.12C1005.85,853.12,1007.97,852.92,1010.10,852.92C1010.92,852.92,1011.73,855.10,1012.55,856.25C1013.69,857.87,1014.84,861.35,1015.98,861.35C1018.10,861.35,1020.23,859.69,1022.35,859.69C1024.64,859.69,1026.93,861.35,1029.22,861.35C1031.50,861.35,1033.79,857.24,1036.08,857.24C1038.69,857.24,1041.31,857.24,1043.92,857.24C1045.88,857.24,1047.84,859.69,1049.80,859.69C1051.76,859.69,1053.73,859.36,1055.69,858.71C1056.50,858.43,1057.32,855.03,1058.14,852.33C1059.28,848.56,1060.42,840.37,1061.57,837.63C1062.39,835.67,1063.20,835.43,1064.02,834.69C1065.82,833.05,1067.61,832.24,1069.41,832.24C1070.07,832.24,1070.72,834.54,1071.37,837.63C1072.19,841.49,1073.01,850.28,1073.82,855.27C1074.31,858.27,1074.80,862.63,1075.29,863.31C1075.62,863.77,1075.95,864.00,1076.27,864.00C1079.54,864.00,1082.81,864.00,1086.08,864.00C1089.98,864.00,1093.88,864.00,1097.78,864.00C1101.63,864.00,1105.48,854.00,1109.33,854.00C1111.78,854.00,1114.22,857.56,1116.67,857.56C1118.89,857.56,1121.11,857.56,1123.33,857.56C1125.56,857.56,1127.78,859.47,1130.00,860.67C1131.85,861.67,1133.70,864.00,1135.56,864.00C1142.22,864.00,1148.89,864.00,1155.56,864.00C1160.00,864.00,1164.44,854.00,1168.89,854.00C1171.11,854.00,1173.33,857.36,1175.56,859.11C1177.40,860.56,1179.24,863.48,1181.08,863.57C1187.20,863.86,1193.32,864.00,1199.44,864.00C1202.68,864.00,1205.92,857.52,1209.16,857.52C1211.32,857.52,1213.48,859.07,1215.64,859.68C1217.80,860.29,1219.96,861.19,1222.12,861.19C1224.64,861.19,1227.16,860.11,1229.68,860.11C1231.48,860.11,1233.28,864.00,1235.08,864.00C1242.63,864.00,1250.19,864.00,1257.75,864.00C1260.63,864.00,1263.51,860.54,1266.39,860.54C1269.63,860.54,1272.87,861.41,1276.11,861.41C1278.27,861.41,1280.43,857.52,1282.59,857.52C1284.75,857.52,1286.91,860.11,1289.07,860.11C1291.59,860.11,1294.11,859.75,1296.63,859.03C1298.79,858.42,1300.95,851.47,1303.11,851.47C1304.91,851.47,1306.71,852.14,1308.51,853.20C1311.03,854.69,1313.55,859.87,1316.07,860.54C1318.23,861.12,1320.39,861.41,1322.55,861.41C1324.71,861.41,1326.87,860.54,1329.03,860.54C1331.55,860.54,1334.07,864.00,1336.59,864.00C1339.11,864.00,1341.63,864.00,1344.15,864.00C1347.75,864.00,1351.35,860.54,1354.95,860.54C1357.47,860.54,1359.99,864.00,1362.51,864.00C1369.34,864.00,1376.18,864.00,1383.02,864.00C1386.98,864.00,1390.94,857.52,1394.90,857.52C1396.70,857.52,1398.50,858.32,1400.30,859.03C1403.18,860.17,1406.06,864.00,1408.94,864.00C1410.74,864.00,1412.54,863.71,1414.34,863.35C1416.86,862.85,1419.38,860.98,1421.90,860.98C1424.06,860.98,1426.22,861.84,1428.38,861.84C1430.90,861.84,1433.42,860.54,1435.94,860.54C1438.10,860.54,1440.26,864.00,1442.42,864.00C1447.10,864.00,1451.78,864.00,1456.46,864.00C1460.42,864.00,1464.38,860.54,1468.34,860.54C1470.86,860.54,1473.38,864.00,1475.90,864.00C1477.70,864.00,1479.50,863.10,1481.30,862.27C1484.54,860.78,1487.78,856.61,1491.02,855.36C1492.60,854.75,1494.18,854.28,1495.77,854.28C1498.14,854.28,1500.52,857.95,1502.89,857.95C1505.05,857.95,1507.21,857.95,1509.37,857.95C1512.61,857.95,1515.85,861.19,1519.09,861.19C1521.97,861.19,1524.85,860.11,1527.73,860.11C1529.89,860.11,1532.05,864.00,1534.21,864.00C1539.25,864.00,1544.29,864.00,1549.33,864.00C1553.65,864.00,1557.97,860.54,1562.29,860.54C1564.45,860.54,1566.61,861.41,1568.77,861.41C1570.93,861.41,1573.09,860.11,1575.25,860.11C1577.05,860.11,1578.85,864.00,1580.65,864.00C1583.89,864.00,1587.13,864.00,1590.37,864.00C1593.97,864.00,1597.57,860.11,1601.17,860.11C1603.69,860.11,1606.21,864.00,1608.73,864.00C1611.97,864.00,1615.21,864.00,1618.44,864.00C1622.04,864.00,1625.64,860.54,1629.24,860.54C1631.40,860.54,1633.56,864.00,1635.72,864.00C1639.68,864.00,1643.64,854.71,1647.60,854.71C1652.28,854.71,1656.96,855.43,1661.64,856.87C1663.80,857.54,1665.96,864.00,1668.12,864.00C1672.75,864.00,1677.37,864.00,1682.00,864.00L1682,864.0L894,864.0Z" fill="url(#gGray)" stroke="none"/>
<path d="M894.00,858.22C896.20,859.69,898.39,861.16,900.59,861.16C903.59,861.16,906.60,859.49,909.61,859.49C911.57,859.49,913.53,863.60,915.49,863.71C917.94,863.84,920.39,863.90,922.84,863.90C924.97,863.90,927.09,862.22,929.22,861.16C931.50,860.02,933.79,857.24,936.08,857.24C938.37,857.24,940.65,859.00,942.94,859.69C945.23,860.37,947.52,861.35,949.80,861.35C951.93,861.35,954.05,859.69,956.18,859.69C958.30,859.69,960.42,861.16,962.55,861.16C964.51,861.16,966.47,860.99,968.43,860.67C969.41,860.50,970.39,859.52,971.37,857.24C972.35,854.95,973.33,849.17,974.31,842.53C975.78,832.58,977.25,815.20,978.73,800.96C979.87,789.89,981.01,775.85,982.16,767.04C983.63,755.72,985.10,749.67,986.57,745.47C987.55,742.67,988.53,741.06,989.51,741.06C990.33,741.06,991.14,743.18,991.96,747.43C992.78,751.68,993.59,761.04,994.41,769.00C995.39,778.55,996.37,790.67,997.35,800.96C998.33,811.25,999.31,820.61,1000.29,830.76C1000.95,837.53,1001.60,849.78,1002.25,851.35C1002.75,852.53,1003.24,853.12,1003.73,853.12C1005.85,853.12,1007.97,852.92,1010.10,852.92C1010.92,852.92,1011.73,855.10,1012.55,856.25C1013.69,857.87,1014.84,861.35,1015.98,861.35C1018.10,861.35,1020.23,859.69,1022.35,859.69C1024.64,859.69,1026.93,861.35,1029.22,861.35C1031.50,861.35,1033.79,857.24,1036.08,857.24C1038.69,857.24,1041.31,857.24,1043.92,857.24C1045.88,857.24,1047.84,859.69,1049.80,859.69C1051.76,859.69,1053.73,859.36,1055.69,858.71C1056.50,858.43,1057.32,855.03,1058.14,852.33C1059.28,848.56,1060.42,840.37,1061.57,837.63C1062.39,835.67,1063.20,835.43,1064.02,834.69C1065.82,833.05,1067.61,832.24,1069.41,832.24C1070.07,832.24,1070.72,834.54,1071.37,837.63C1072.19,841.49,1073.01,850.28,1073.82,855.27C1074.31,858.27,1074.80,862.63,1075.29,863.31C1075.62,863.77,1075.95,864.00,1076.27,864.00C1079.54,864.00,1082.81,864.00,1086.08,864.00C1089.98,864.00,1093.88,864.00,1097.78,864.00C1101.63,864.00,1105.48,854.00,1109.33,854.00C1111.78,854.00,1114.22,857.56,1116.67,857.56C1118.89,857.56,1121.11,857.56,1123.33,857.56C1125.56,857.56,1127.78,859.47,1130.00,860.67C1131.85,861.67,1133.70,864.00,1135.56,864.00C1142.22,864.00,1148.89,864.00,1155.56,864.00C1160.00,864.00,1164.44,854.00,1168.89,854.00C1171.11,854.00,1173.33,857.36,1175.56,859.11C1177.40,860.56,1179.24,863.48,1181.08,863.57C1187.20,863.86,1193.32,864.00,1199.44,864.00C1202.68,864.00,1205.92,857.52,1209.16,857.52C1211.32,857.52,1213.48,859.07,1215.64,859.68C1217.80,860.29,1219.96,861.19,1222.12,861.19C1224.64,861.19,1227.16,860.11,1229.68,860.11C1231.48,860.11,1233.28,864.00,1235.08,864.00C1242.63,864.00,1250.19,864.00,1257.75,864.00C1260.63,864.00,1263.51,860.54,1266.39,860.54C1269.63,860.54,1272.87,861.41,1276.11,861.41C1278.27,861.41,1280.43,857.52,1282.59,857.52C1284.75,857.52,1286.91,860.11,1289.07,860.11C1291.59,860.11,1294.11,859.75,1296.63,859.03C1298.79,858.42,1300.95,851.47,1303.11,851.47C1304.91,851.47,1306.71,852.14,1308.51,853.20C1311.03,854.69,1313.55,859.87,1316.07,860.54C1318.23,861.12,1320.39,861.41,1322.55,861.41C1324.71,861.41,1326.87,860.54,1329.03,860.54C1331.55,860.54,1334.07,864.00,1336.59,864.00C1339.11,864.00,1341.63,864.00,1344.15,864.00C1347.75,864.00,1351.35,860.54,1354.95,860.54C1357.47,860.54,1359.99,864.00,1362.51,864.00C1369.34,864.00,1376.18,864.00,1383.02,864.00C1386.98,864.00,1390.94,857.52,1394.90,857.52C1396.70,857.52,1398.50,858.32,1400.30,859.03C1403.18,860.17,1406.06,864.00,1408.94,864.00C1410.74,864.00,1412.54,863.71,1414.34,863.35C1416.86,862.85,1419.38,860.98,1421.90,860.98C1424.06,860.98,1426.22,861.84,1428.38,861.84C1430.90,861.84,1433.42,860.54,1435.94,860.54C1438.10,860.54,1440.26,864.00,1442.42,864.00C1447.10,864.00,1451.78,864.00,1456.46,864.00C1460.42,864.00,1464.38,860.54,1468.34,860.54C1470.86,860.54,1473.38,864.00,1475.90,864.00C1477.70,864.00,1479.50,863.10,1481.30,862.27C1484.54,860.78,1487.78,856.61,1491.02,855.36C1492.60,854.75,1494.18,854.28,1495.77,854.28C1498.14,854.28,1500.52,857.95,1502.89,857.95C1505.05,857.95,1507.21,857.95,1509.37,857.95C1512.61,857.95,1515.85,861.19,1519.09,861.19C1521.97,861.19,1524.85,860.11,1527.73,860.11C1529.89,860.11,1532.05,864.00,1534.21,864.00C1539.25,864.00,1544.29,864.00,1549.33,864.00C1553.65,864.00,1557.97,860.54,1562.29,860.54C1564.45,860.54,1566.61,861.41,1568.77,861.41C1570.93,861.41,1573.09,860.11,1575.25,860.11C1577.05,860.11,1578.85,864.00,1580.65,864.00C1583.89,864.00,1587.13,864.00,1590.37,864.00C1593.97,864.00,1597.57,860.11,1601.17,860.11C1603.69,860.11,1606.21,864.00,1608.73,864.00C1611.97,864.00,1615.21,864.00,1618.44,864.00C1622.04,864.00,1625.64,860.54,1629.24,860.54C1631.40,860.54,1633.56,864.00,1635.72,864.00C1639.68,864.00,1643.64,854.71,1647.60,854.71C1652.28,854.71,1656.96,855.43,1661.64,856.87C1663.80,857.54,1665.96,864.00,1668.12,864.00C1672.75,864.00,1677.37,864.00,1682.00,864.00" fill="none" stroke="#27272a" stroke-width="2"/>
<line x1="2010" y1="612" x2="2010" y2="864" stroke="#a1a1aa" stroke-width="2"/><line x1="1998" y1="612" x2="2010" y2="612" stroke="#a1a1aa" stroke-width="2"/><line x1="1998" y1="737.4" x2="2010" y2="737.4" stroke="#a1a1aa" stroke-width="2"/><line x1="1998" y1="800.8" x2="2010" y2="800.8" stroke="#a1a1aa" stroke-width="2"/><line x1="1998" y1="864" x2="2010" y2="864" stroke="#a1a1aa" stroke-width="2"/><path d="M2010,612H2798M2010,737.4H2798M2010,800.8H2798M2010,864H2798M2010.00,612V864M2016.62,612V864M2049.73,612V864M2082.84,612V864M2122.57,612V864M2168.92,612V864M2215.28,612V864M2261.63,612V864M2314.60,612V864M2367.58,612V864M2413.93,612V864M2466.90,612V864M2519.88,612V864M2572.85,612V864M2625.83,612V864M2685.42,612V864M2745.02,612V864M2798.00,612V864" stroke="#27272a" stroke-width="2" stroke-dasharray="6 6" fill="none"/>
<path d="M2010.00,786.32C2028.47,786.24,2046.93,786.16,2065.40,785.86C2077.47,785.67,2089.54,785.27,2101.62,784.50C2109.16,784.02,2116.71,782.69,2124.25,782.69C2146.89,782.69,2169.52,782.69,2192.15,782.69C2214.79,782.69,2237.42,783.42,2260.06,783.60C2297.78,783.90,2335.51,783.75,2373.23,784.05C2386.81,784.16,2400.39,785.86,2413.97,785.86C2460.75,785.86,2507.53,785.86,2554.31,785.86C2569.40,785.86,2584.49,784.96,2599.58,784.96C2622.21,784.96,2644.85,784.96,2667.48,784.96C2690.12,784.96,2712.75,785.86,2735.39,785.86C2756.26,785.86,2777.13,785.41,2798.00,784.96L2798,864L2010,864Z" fill="url(#gGray)" stroke="none"/>
<path d="M2010.00,786.32C2028.47,786.24,2046.93,786.16,2065.40,785.86C2077.47,785.67,2089.54,785.27,2101.62,784.50C2109.16,784.02,2116.71,782.69,2124.25,782.69C2146.89,782.69,2169.52,782.69,2192.15,782.69C2214.79,782.69,2237.42,783.42,2260.06,783.60C2297.78,783.90,2335.51,783.75,2373.23,784.05C2386.81,784.16,2400.39,785.86,2413.97,785.86C2460.75,785.86,2507.53,785.86,2554.31,785.86C2569.40,785.86,2584.49,784.96,2599.58,784.96C2622.21,784.96,2644.85,784.96,2667.48,784.96C2690.12,784.96,2712.75,785.86,2735.39,785.86C2756.26,785.86,2777.13,785.41,2798.00,784.96" fill="none" stroke="#27272a" stroke-width="2"/>
<line x1="894" y1="1288" x2="894" y2="1540" stroke="#a1a1aa" stroke-width="2"/><line x1="882" y1="1288" x2="894" y2="1288" stroke="#a1a1aa" stroke-width="2"/><line x1="882" y1="1404" x2="894" y2="1404" stroke="#a1a1aa" stroke-width="2"/><line x1="882" y1="1472" x2="894" y2="1472" stroke="#a1a1aa" stroke-width="2"/><line x1="882" y1="1540" x2="894" y2="1540" stroke="#a1a1aa" stroke-width="2"/><path d="M894,1288H1682M894,1404H1682M894,1472H1682M894,1540H1682M894.00,1288V1540M900.62,1288V1540M933.73,1288V1540M966.84,1288V1540M1006.57,1288V1540M1052.92,1288V1540M1099.28,1288V1540M1145.63,1288V1540M1198.60,1288V1540M1251.58,1288V1540M1297.93,1288V1540M1350.90,1288V1540M1403.88,1288V1540M1456.85,1288V1540M1509.83,1288V1540M1569.42,1288V1540M1629.02,1288V1540M1682.00,1288V1540" stroke="#27272a" stroke-width="2" stroke-dasharray="6 6" fill="none"/>
<path d="M894,1406.7H1682V1540H894Z" fill="url(#gPurple)" stroke="none"/>
<path d="M894,1406.7H1682" fill="none" stroke="#6C28D9" stroke-width="2"/>
<path d="M894,1434H1682" fill="none" stroke="#8884d8" stroke-width="2"/>
<path d="M2010,1240H2798M2010,1492H2798M2010.00,1240V1492M2016.62,1240V1492M2049.73,1240V1492M2082.84,1240V1492M2122.57,1240V1492M2168.92,1240V1492M2215.28,1240V1492M2261.63,1240V1492M2314.60,1240V1492M2367.58,1240V1492M2413.93,1240V1492M2466.90,1240V1492M2519.88,1240V1492M2572.85,1240V1492M2625.83,1240V1492M2685.42,1240V1492M2745.02,1240V1492M2798.00,1240V1492" stroke="#27272a" stroke-width="2" stroke-dasharray="6 6" fill="none"/>
</svg>
</div></body></html>
